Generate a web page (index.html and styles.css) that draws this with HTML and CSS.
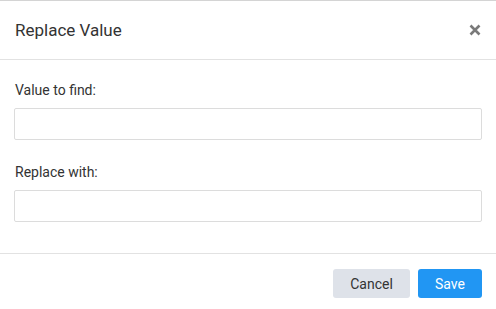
FILE: index.html
```html
<!DOCTYPE html>
<html>
<head>
<meta charset="utf-8">
<link rel="stylesheet" href="styles.css">
</head>
<body>
<div class="bleed"></div>
<div class="modal">
  <div class="modal-header">
    <h2 class="modal-title">Replace Value</h2>
    <button class="close" aria-label="Close">
      <svg width="12" height="12" viewBox="0 0 12 12"><path d="M1.5 1.5 L10.5 10.5 M10.5 1.5 L1.5 10.5" stroke="#7a7a7a" stroke-width="2.6" stroke-linecap="butt"/></svg>
    </button>
  </div>
  <div class="modal-body">
    <label class="field-label">Value to find:</label>
    <input class="field-input" type="text">
    <label class="field-label second">Replace with:</label>
    <input class="field-input" type="text">
  </div>
  <div class="modal-footer">
    <button class="btn btn-cancel">Cancel</button>
    <button class="btn btn-save">Save</button>
  </div>
</div>
</body>
</html>
```
FILE: styles.css
```css
html, body {
  margin: 0;
  padding: 0;
  background: #fff;
  font-family: Roboto, "Liberation Sans", sans-serif;
  color: #333;
}
.bleed {
  height: 1px;
  background: #d4d4d4;
}
.modal {
  width: 496px;
}
.modal-header {
  height: 58px;
  display: flex;
  align-items: center;
  justify-content: space-between;
  padding: 0 15px 0 15px;
  border-bottom: 1px solid #e2e2e2;
}
.modal-title {
  margin: 0;
  font-size: 17px;
  font-weight: 400;
  color: #333;
}
.close {
  border: 0;
  background: none;
  padding: 0;
  width: 12px;
  height: 12px;
  display: flex;
}
.modal-body {
  padding: 20px 14px 31px 14px;
  display: flex;
  flex-direction: column;
}
.field-label {
  font-size: 14px;
  line-height: 20px;
  padding-left: 1px;
  margin-bottom: 8px;
  color: #333;
}
.field-label.second {
  margin-top: 22px;
}
.field-input {
  box-sizing: border-box;
  height: 32px;
  width: 468px;
  border: 1px solid #dcdcdc;
  border-radius: 2px;
  margin: 0;
  outline: none;
}
.modal-footer {
  border-top: 1px solid #e2e2e2;
  padding: 15px 14px 11px;
  display: flex;
  justify-content: flex-end;
  gap: 8px;
}
.btn {
  height: 29px;
  border: 0;
  border-radius: 3px;
  font-family: Roboto, "Liberation Sans", sans-serif;
  font-size: 14px;
  padding: 0;
  cursor: pointer;
}
.btn-cancel {
  width: 77px;
  background: #dee2e9;
  color: #333;
}
.btn-save {
  width: 64px;
  background: #2196f3;
  color: #fff;
}
```
